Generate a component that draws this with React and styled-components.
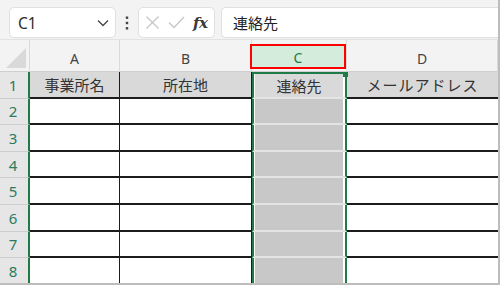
import React from 'react'
import styled, { createGlobalStyle } from 'styled-components'

const GlobalStyle = createGlobalStyle`
  html, body {
    margin: 0;
    padding: 0;
    background: #fff;
  }
  * {
    box-sizing: border-box;
  }
`

const FONT = `"Noto Sans", "Noto Sans CJK JP", sans-serif`
const GREEN = '#1f7a47'
const LINE = '#1c1c1c'

const Frame = styled.div`
  width: 500px;
  height: 285px;
  overflow: hidden;
  background: #f3f3f3;
  border-right: 2px solid #bdbdbd;
  border-bottom: 2px solid #bdbdbd;
  font-family: ${FONT};
  display: flex;
  flex-direction: column;
`

// formula bar area
const Toolbar = styled.div`
  height: 40px;
  flex: none;
  display: flex;
  align-items: flex-end;
  padding: 0 0 1px 9px;
  border-bottom: 1px solid #e2e2e2;
`

const NameBox = styled.div`
  width: 107px;
  height: 31px;
  background: #fff;
  border: 1px solid #e0e0e0;
  border-radius: 5px;
  display: flex;
  align-items: center;
  justify-content: space-between;
  padding: 0 6px 0 8px;
  font-size: 15.5px;
  color: #2b2b2b;
`

const Grip = styled.div`
  width: 22px;
  height: 31px;
  display: flex;
  align-items: center;
  justify-content: center;
`

const FxBox = styled.div`
  width: 77px;
  height: 31px;
  background: #fff;
  border: 1px solid #e0e0e0;
  border-radius: 5px;
  display: flex;
  align-items: center;
  gap: 8px;
  padding: 0 0 0 6px;
`

const FxLabel = styled.span`
  font-family: "DejaVu Serif", "Liberation Serif", serif;
  font-style: italic;
  font-weight: bold;
  font-size: 15px;
  color: #3a3a3a;
  letter-spacing: -0.5px;
`

const FormulaInput = styled.div`
  flex: 1;
  height: 31px;
  margin-left: 6px;
  background: #fff;
  border: 1px solid #e0e0e0;
  border-right: none;
  border-radius: 5px 0 0 5px;
  display: flex;
  align-items: center;
  padding-left: 11px;
  font-size: 15px;
  color: #222;
`

// sheet grid
const Sheet = styled.div`
  flex: 1;
  display: grid;
  grid-template-columns: 30px 90px 132px 95px 1fr;
  grid-template-rows: 32px repeat(8, 26.6px);
  background: #fff;
`

const Corner = styled.div`
  background: #f3f3f3;
  border-right: 1px solid #dadada;
  border-bottom: 1px solid #cfcfcf;
  display: flex;
  align-items: flex-end;
  justify-content: flex-end;
  padding: 0 3px 3px 0;
`

const ColHead = styled.div`
  background: #f3f3f3;
  border-right: 1px solid #dadada;
  border-bottom: 1px solid #cfcfcf;
  display: flex;
  align-items: center;
  justify-content: center;
  font-size: 14px;
  color: #444;
  padding-top: 5px;
`

const MarkedHead = styled.div`
  flex: 1;
  align-self: stretch;
  margin: -1px 0 2px -2px;
  border: 2.5px solid #ff0000;
  background: #d3ecdc;
  display: flex;
  align-items: center;
  justify-content: center;
  padding-top: 2px;
  color: ${GREEN};
`

const RowHead = styled.div`
  background: #e6e6e6;
  border-right: 2px solid ${GREEN};
  border-bottom: 1px solid #cdcdcd;
  display: flex;
  align-items: center;
  justify-content: center;
  font-size: 15px;
  color: #2c7a5e;
  padding-right: 2px;
`

const Cell = styled.div`
  background: ${p => (p.$title ? '#d9d9d9' : '#fff')};
  border-right: ${p => (p.$last ? 'none' : `1.5px solid ${LINE}`)};
  border-bottom: 2px solid ${LINE};
  display: flex;
  align-items: center;
  justify-content: center;
  font-size: 15px;
  color: #333;
  letter-spacing: ${p => (p.$wide ? '1px' : '0')};
`

const SelCell = styled.div`
  position: relative;
  border-left: 2px solid ${GREEN};
  border-right: 2px solid ${GREEN};
  border-top: ${p => (p.$title ? `2px solid ${GREEN}` : 'none')};
  border-bottom: 2px solid #e4e4e4;
  padding: 0 2px 0 1px;
  background: #fff;
  display: flex;
`

const SelFill = styled.div`
  flex: 1;
  background: ${p => (p.$title ? '#d9d9d9' : '#c8c8c8')};
  display: flex;
  align-items: center;
  justify-content: center;
  font-size: 15px;
  color: #333;
`

const Handle = styled.span`
  position: absolute;
  top: -2px;
  right: -3px;
  width: 5px;
  height: 5px;
  background: ${GREEN};
`

const Chevron = () => (
  <svg width="12" height="8" viewBox="0 0 12 8">
    <path d="M1 1.5 L6 6.5 L11 1.5" fill="none" stroke="#444" strokeWidth="1.3" />
  </svg>
)

const Dots = () => (
  <svg width="4" height="14" viewBox="0 0 4 14">
    <rect x="0.8" y="0.5" width="2.4" height="2.4" fill="#444" />
    <rect x="0.8" y="5.8" width="2.4" height="2.4" fill="#444" />
    <rect x="0.8" y="11.1" width="2.4" height="2.4" fill="#444" />
  </svg>
)

const Cross = () => (
  <svg width="15" height="15" viewBox="0 0 15 15">
    <path d="M1.5 1.5 L13.5 13.5 M13.5 1.5 L1.5 13.5" stroke="#c6c6c6" strokeWidth="1.3" />
  </svg>
)

const Check = () => (
  <svg width="17" height="13" viewBox="0 0 17 13">
    <path d="M1 6.5 L6 11.5 L16 1" fill="none" stroke="#c6c6c6" strokeWidth="1.3" />
  </svg>
)

const Triangle = () => (
  <svg width="20" height="20" viewBox="0 0 20 20">
    <path d="M20 0 L20 20 L0 20 Z" fill="#d9d9d9" />
  </svg>
)

const titles = ['事業所名', '所在地', '連絡先', 'メールアドレス']

const App = () => {
  const rows = [1, 2, 3, 4, 5, 6, 7, 8]
  return (
    <Frame>
      <GlobalStyle />
      <Toolbar>
        <NameBox>
          <span>C1</span>
          <Chevron />
        </NameBox>
        <Grip>
          <Dots />
        </Grip>
        <FxBox>
          <Cross />
          <Check />
          <FxLabel>fx</FxLabel>
        </FxBox>
        <FormulaInput>連絡先</FormulaInput>
      </Toolbar>

      <Sheet>
        <Corner>
          <Triangle />
        </Corner>
        <ColHead>A</ColHead>
        <ColHead>B</ColHead>
        <ColHead>
          <MarkedHead>C</MarkedHead>
        </ColHead>
        <ColHead>D</ColHead>

        {rows.map(r => {
          const title = r === 1
          return (
            <React.Fragment key={r}>
              <RowHead>{r}</RowHead>
              <Cell $title={title}>{title && titles[0]}</Cell>
              <Cell $title={title}>{title && titles[1]}</Cell>
              <SelCell $title={title}>
                <SelFill $title={title}>{title && titles[2]}</SelFill>
                {title && <Handle />}
              </SelCell>
              <Cell $title={title} $last $wide>{title && titles[3]}</Cell>
            </React.Fragment>
          )
        })}
      </Sheet>
    </Frame>
  )
}

export default App
